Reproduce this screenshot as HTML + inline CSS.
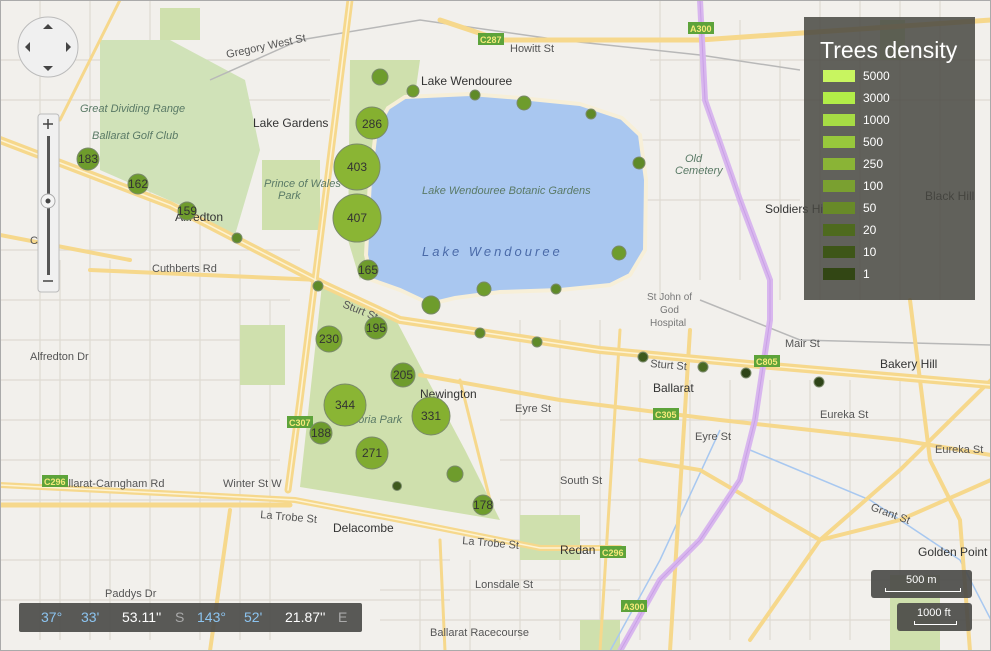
<!DOCTYPE html>
<html><head><meta charset="utf-8"><style>
html,body{margin:0;padding:0;width:991px;height:651px;overflow:hidden;background:#f2f0ec;font-family:"Segoe UI","Liberation Sans","DejaVu Sans",sans-serif}
svg{position:absolute;left:0;top:0}
.lg{position:absolute;left:804px;top:17px;width:171px;height:283px;background:rgba(72,72,66,0.85);color:#fff}
.lg h1{margin:0;position:absolute;left:16px;top:20px;font-size:23px;font-weight:normal;white-space:nowrap}
.lg .r{position:absolute;left:19px;width:32px;height:12px}
.lg .t{position:absolute;left:59px;font-size:12px;line-height:12px}
.coord{position:absolute;left:19px;top:603px;width:343px;height:29px;background:rgba(72,72,70,0.9);border-radius:2px;font-size:14px;color:#fff}
.coord span{position:absolute;top:6px}
.b{color:#8cc4f0}.g{color:#aaa}
.sc{position:absolute;background:rgba(72,72,70,0.9);border-radius:3px;color:#fff;font-size:11px}
</style></head><body>
<svg width="991" height="651" viewBox="0 0 991 651">
<rect width="991" height="651" fill="#f2f0ec"/>
<g stroke="#dedad2" stroke-width="1.2" fill="none">
<path d="M0 60H330M0 100H330M0 250H300M0 300H290M0 340H280M0 380H280M0 420H280M0 460H280M0 500H280M0 560H450M0 600H450"/>
<path d="M40 0V640M90 0V640M150 0V640M200 200V640M240 260V640M270 300V640M110 260V640M60 260V640"/>
<path d="M660 0V300M700 0V280M740 20V280M780 60V300M820 0V300M860 0V300M900 0V300M940 0V300M620 140H800M600 200H800M650 60H991M650 100H991"/>
<path d="M520 320V640M560 320V640M600 320V640M640 380V640M690 380V640M730 380V640M770 380V640M810 380V640M850 380V640M900 380V640M500 420H991M500 460H991M500 500H991M500 540H991M500 580H991M500 620H991"/>
<path d="M420 560V651M470 560V651M380 590H620M380 620H620"/>
</g>
<g fill="#cfe0ad">
<path d="M100 40L170 40 245 80 260 150 235 235 180 205 100 170Z" fill="#d0e2b8"/>
<path d="M262 160H320V230H262Z"/>
<path d="M350 60H420L415 95 390 110 375 140 370 240 360 280 348 240Z"/>
<path d="M322 285L395 318 425 375 465 450 500 520 410 505 300 487Z"/>
<path d="M240 325H285V385H240Z"/><path d="M520 515H580V560H520Z"/>
<path d="M890 575H940V651H890Z"/><path d="M580 620H620V651H580Z"/>
<path d="M160 8H200V40H160Z"/><path d="M880 20H905V60H880Z"/>
</g>
<path d="M388 108L405 97 470 94 520 98 580 104 622 118 640 135 646 180 645 250 630 275 610 285 560 290 500 292 455 298 430 304 400 290 372 280 366 255 370 180 376 130Z" fill="#a9c7f0" stroke="#f7efd8" stroke-width="4"/>
<path d="M210 80L300 40 420 20 560 40 700 55 800 70M700 300L800 340 991 345" stroke="#b8b8b8" stroke-width="1.5" fill="none"/>
<path d="M720 430L660 560 610 651M750 450L870 500 960 560 991 620" stroke="#a8c8f0" stroke-width="1.5" fill="none"/>
<g stroke="#f6d88c" stroke-linecap="round" fill="none">
<path d="M0 140L170 205 325 285 400 320 600 350 760 365 991 385" stroke-width="8"/>
<path d="M350 0L300 400 288 490" stroke-width="7"/>
<path d="M0 485L200 495 295 500 400 520 540 548 620 548" stroke-width="6"/>
<path d="M0 505L290 505" stroke-width="5"/>
<path d="M440 20L500 40 700 40 991 20" stroke-width="5"/>
<path d="M90 270L320 280" stroke-width="4"/>
<path d="M0 235L130 260" stroke-width="4"/>
<path d="M420 375L560 400 720 420 900 440 991 455" stroke-width="4"/>
<path d="M640 460L700 470 820 540 900 520 991 480" stroke-width="4"/>
<path d="M991 380L900 470 820 540 750 640" stroke-width="4"/>
<path d="M690 330L670 651" stroke-width="4"/>
<path d="M620 330L600 651" stroke-width="3"/>
<path d="M120 0L60 120" stroke-width="3"/>
<path d="M910 300L930 460 960 520 970 651" stroke-width="4"/>
<path d="M230 510L210 651" stroke-width="4"/>
<path d="M440 540L445 651" stroke-width="3"/>
<path d="M460 380L490 500" stroke-width="3"/>
</g>
<g stroke="#fdf3d4" stroke-linecap="round" fill="none" stroke-width="1.5">
<path d="M0 140L170 205 325 285 400 320 600 350 760 365 991 385"/>
<path d="M350 0L300 400 288 490"/>
<path d="M0 485L200 495 295 500 400 520 540 548 620 548"/>
</g>
<path d="M700 0L705 100 740 200 770 280 770 320 755 420 740 480 700 540 660 580 620 651" stroke="#d8b6ee" stroke-width="6" fill="none"/>
<path d="M700 0L705 100 740 200 770 280 770 320 755 420 740 480 700 540 660 580 620 651" stroke="#c9a0e6" stroke-width="1" fill="none"/>
<g font-family="Segoe UI,Liberation Sans,sans-serif" font-size="12" fill="#333">
<text x="421" y="85">Lake Wendouree</text><text x="253" y="127">Lake Gardens</text>
<text x="175" y="221">Alfredton</text><text x="420" y="398">Newington</text>
<text x="653" y="392">Ballarat</text><text x="880" y="368">Bakery Hill</text>
<text x="925" y="200">Black Hill</text><text x="918" y="556">Golden Point</text>
<text x="333" y="532">Delacombe</text><text x="560" y="554">Redan</text>
<text x="765" y="213">Soldiers Hill</text>
</g>
<g font-size="11" fill="#555" font-family="Segoe UI,Liberation Sans,sans-serif">
<text x="510" y="52">Howitt St</text><text x="227" y="58" transform="rotate(-12 227 58)">Gregory West St</text>
<text x="342" y="307" transform="rotate(22 342 307)">Sturt St</text><text x="650" y="367" transform="rotate(5 650 367)">Sturt St</text>
<text x="785" y="347">Mair St</text><text x="515" y="412">Eyre St</text><text x="695" y="440">Eyre St</text>
<text x="260" y="518" transform="rotate(5 260 518)">La Trobe St</text><text x="462" y="544" transform="rotate(5 462 544)">La Trobe St</text>
<text x="55" y="487">Ballarat-Carngham Rd</text><text x="223" y="487">Winter St W</text>
<text x="152" y="272">Cuthberts Rd</text><text x="30" y="244">Cuthb</text>
<text x="560" y="484">South St</text><text x="105" y="597">Paddys Dr</text>
<text x="475" y="588">Lonsdale St</text><text x="430" y="636">Ballarat Racecourse</text>
<text x="30" y="360">Alfredton Dr</text><text x="820" y="418">Eureka St</text><text x="935" y="453">Eureka St</text>
<text x="870" y="510" transform="rotate(20 870 510)">Grant St</text>
</g>
<g font-size="11" fill="#5a7a66" font-style="italic" font-family="Segoe UI,Liberation Sans,sans-serif">
<text x="80" y="112">Great Dividing Range</text><text x="92" y="139">Ballarat Golf Club</text>
<text x="264" y="187">Prince of Wales</text><text x="278" y="199">Park</text>
<text x="422" y="194">Lake Wendouree Botanic Gardens</text>
<text x="340" y="423">Victoria Park</text><text x="685" y="162">Old</text><text x="675" y="174">Cemetery</text>
</g>
<text x="422" y="256" font-size="13" fill="#4a6aa8" font-style="italic" letter-spacing="3">Lake Wendouree</text>
<g font-size="10" fill="#777"><text x="647" y="300">St John of</text><text x="660" y="313">God</text><text x="650" y="326">Hospital</text></g>
<g font-size="9" font-weight="bold" fill="#f5e97a">
<rect x="478" y="33" width="26" height="12" fill="#5da33a"/><text x="480" y="43">C287</text>
<rect x="688" y="22" width="26" height="12" fill="#5da33a"/><text x="690" y="32">A300</text>
<rect x="754" y="355" width="26" height="12" fill="#5da33a"/><text x="756" y="365">C805</text>
<rect x="653" y="408" width="26" height="12" fill="#5da33a"/><text x="655" y="418">C305</text>
<rect x="287" y="416" width="26" height="12" fill="#5da33a"/><text x="289" y="426">C307</text>
<rect x="42" y="475" width="26" height="12" fill="#5da33a"/><text x="44" y="485">C296</text>
<rect x="600" y="546" width="26" height="12" fill="#5da33a"/><text x="602" y="556">C296</text>
<rect x="621" y="600" width="26" height="12" fill="#5da33a"/><text x="623" y="610">A300</text>
</g>
<g stroke="#7a8a6a" stroke-width="1">
<circle cx="380" cy="77" r="8" fill="#6e9c2c"/><circle cx="413" cy="91" r="6" fill="#6e9c2c"/>
<circle cx="475" cy="95" r="5" fill="#5f8a28"/><circle cx="524" cy="103" r="7" fill="#6e9c2c"/>
<circle cx="591" cy="114" r="5" fill="#5f8a28"/><circle cx="639" cy="163" r="6" fill="#5f8a28"/>
<circle cx="619" cy="253" r="7" fill="#6e9c2c"/><circle cx="556" cy="289" r="5" fill="#5f8a28"/>
<circle cx="484" cy="289" r="7" fill="#6e9c2c"/><circle cx="431" cy="305" r="9" fill="#6e9c2c"/>
<circle cx="237" cy="238" r="5" fill="#5f8a28"/><circle cx="318" cy="286" r="5" fill="#5f8a28"/>
<circle cx="480" cy="333" r="5" fill="#5f8a28"/><circle cx="537" cy="342" r="5" fill="#5f8a28"/>
<circle cx="643" cy="357" r="5" fill="#3e5a1c"/><circle cx="703" cy="367" r="5" fill="#4a6a22"/>
<circle cx="746" cy="373" r="5" fill="#2e4418"/><circle cx="819" cy="382" r="5" fill="#2e4418"/>
<circle cx="455" cy="474" r="8" fill="#6e9c2c"/><circle cx="397" cy="486" r="4.5" fill="#3e5a1c"/>
<circle cx="372" cy="123" r="16" fill="#85b030"/><circle cx="357" cy="167" r="23" fill="#8ab534"/>
<circle cx="357" cy="218" r="24" fill="#8ab534"/><circle cx="368" cy="270" r="10" fill="#6e9c2c"/>
<circle cx="88" cy="159" r="11" fill="#6e9c2c"/><circle cx="138" cy="184" r="10" fill="#6e9c2c"/>
<circle cx="187" cy="211" r="9" fill="#6e9c2c"/>
<circle cx="376" cy="328" r="11" fill="#6e9c2c"/><circle cx="329" cy="339" r="13" fill="#78a42e"/>
<circle cx="403" cy="375" r="12" fill="#6e9c2c"/><circle cx="345" cy="405" r="21" fill="#8ab534"/>
<circle cx="431" cy="416" r="19" fill="#85b030"/><circle cx="321" cy="433" r="11" fill="#6e9c2c"/>
<circle cx="372" cy="453" r="16" fill="#80ab30"/><circle cx="483" cy="505" r="10" fill="#6e9c2c"/>
</g>
<g font-size="12" fill="#333" text-anchor="middle" font-family="Segoe UI,Liberation Sans,sans-serif">
<text x="372" y="128">286</text><text x="357" y="171">403</text><text x="357" y="222">407</text><text x="368" y="274">165</text>
<text x="88" y="163">183</text><text x="138" y="188">162</text><text x="187" y="215">159</text>
<text x="376" y="332">195</text><text x="329" y="343">230</text><text x="403" y="379">205</text>
<text x="345" y="409">344</text><text x="431" y="420">331</text><text x="321" y="437">188</text>
<text x="372" y="457">271</text><text x="483" y="509">178</text>
</g>
<circle cx="48" cy="47" r="30" fill="#f0f0f0" stroke="#bbb"/>
<g fill="#444"><path d="M48 24l-5 5h10z"/><path d="M48 71l-5-5h10z"/><path d="M25 47l5-5v10z"/><path d="M71 47l-5-5v10z"/></g>
<rect x="38" y="114" width="21" height="178" rx="3" fill="#f0f0f0" stroke="#bbb"/>
<path d="M43 124h10M48 119v10M43 281h10" stroke="#444" stroke-width="1.5"/>
<rect x="47" y="136" width="3" height="139" fill="#555"/>
<circle cx="48" cy="201" r="7" fill="#f4f4f4" stroke="#aaa"/><circle cx="48" cy="201" r="2.5" fill="#444"/>
<rect x="0.5" y="0.5" width="990" height="650" fill="none" stroke="#aaa"/>
</svg>
<div class="lg"><h1>Trees density</h1>
<div class="r" style="top:53px;background:#c8f560"></div><div class="t" style="top:53px">5000</div>
<div class="r" style="top:75px;background:#b2ed48"></div><div class="t" style="top:75px">3000</div>
<div class="r" style="top:97px;background:#a6dc44"></div><div class="t" style="top:97px">1000</div>
<div class="r" style="top:119px;background:#98c83c"></div><div class="t" style="top:119px">500</div>
<div class="r" style="top:141px;background:#8ab436"></div><div class="t" style="top:141px">250</div>
<div class="r" style="top:163px;background:#7aa030"></div><div class="t" style="top:163px">100</div>
<div class="r" style="top:185px;background:#688a28"></div><div class="t" style="top:185px">50</div>
<div class="r" style="top:207px;background:#4e6a1e"></div><div class="t" style="top:207px">20</div>
<div class="r" style="top:229px;background:#3e5618"></div><div class="t" style="top:229px">10</div>
<div class="r" style="top:251px;background:#324614"></div><div class="t" style="top:251px">1</div>
</div>
<div class="coord"><span class="b" style="left:22px">37°</span><span class="b" style="left:62px">33'</span><span style="left:103px">53.11''</span><span class="g" style="left:156px">S</span><span class="b" style="left:178px">143°</span><span class="b" style="left:225px">52'</span><span style="left:266px">21.87''</span><span class="g" style="left:319px">E</span></div>
<div class="sc" style="left:871px;top:570px;width:101px;height:28px"><span style="position:absolute;left:35px;top:4px">500 m</span><div style="position:absolute;left:14px;top:18px;width:74px;height:3px;border:1px solid #fff;border-top:none"></div></div>
<div class="sc" style="left:897px;top:603px;width:75px;height:28px"><span style="position:absolute;left:20px;top:4px">1000 ft</span><div style="position:absolute;left:17px;top:18px;width:41px;height:3px;border:1px solid #fff;border-top:none"></div></div>
</body></html>
